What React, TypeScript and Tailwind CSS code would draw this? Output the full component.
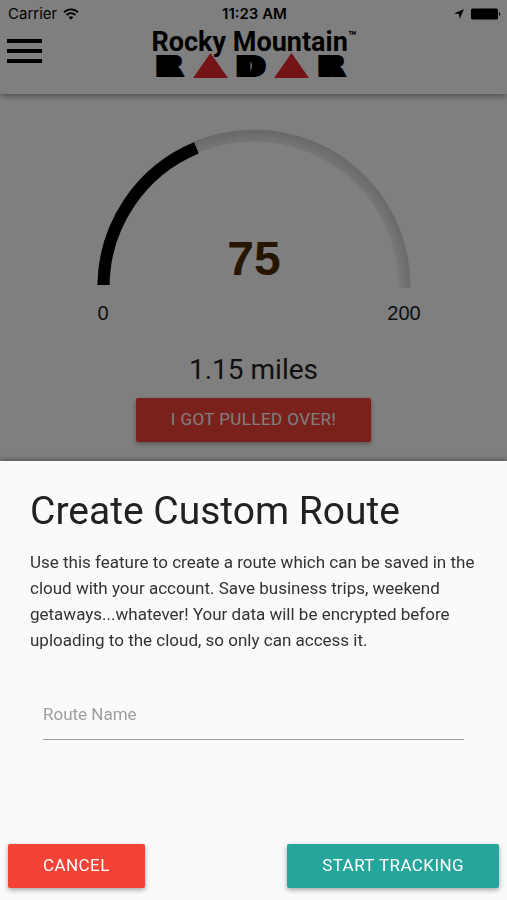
import { useState } from "react";

const MAX_SPEED = 200;

type GaugeProps = {
  value: number;
}

function StatusBar() {
  return (
    <div className="grid grid-cols-3 items-center h-7 pl-2 pr-1.5 font-[Inter,sans-serif] text-[15px] leading-5 text-black">
      <div className="flex items-center gap-1.5">
        <span>Carrier</span>
        <svg viewBox="0 0 16 12" className="w-4 h-3" fill="none" stroke="black" strokeWidth="1.8">
          <path d="M1 4.3a10 10 0 0 1 14 0" />
          <path d="M3.6 7a6.3 6.3 0 0 1 8.8 0" />
          <path d="M8 11.8 5.6 9.3a3.5 3.5 0 0 1 4.8 0z" fill="black" stroke="none" />
        </svg>
      </div>
      <span className="text-center font-semibold">11:23 AM</span>
      <div className="flex items-center justify-end gap-[7px]">
        <svg viewBox="0 0 10 10" className="w-2.5 h-2.5">
          <path d="M10 0 5.6 10 5 5 0 4.6z" />
        </svg>
        <svg viewBox="0 0 30 12" className="w-[30px] h-3">
          <rect x="0" y="0.5" width="27" height="11" rx="1.5" />
          <path d="M28 4a2.2 2.2 0 0 1 0 4z" />
        </svg>
      </div>
    </div>
  );
}

function Triangle() {
  return (
    <svg viewBox="0 0 35 25" className="w-[35px] h-[25px]">
      <path d="M17.5 0 35 25H0z" fill="#e8282e" />
    </svg>
  );
}

// heavy slab look: the side shadows thicken the letter horizontally
function LogoLetter({ letter }: { letter: string }) {
  return (
    <span className="flex w-9 justify-center [text-shadow:-4px_0_black,-2px_0_black,2px_0_black,4px_0_black]">{letter}</span>
  );
}

function Logo() {
  return (
    <div className="w-[208px] text-black">
      <div className="flex items-start h-6 font-[Roboto,sans-serif] font-bold">
        <span className="text-[27px] leading-6 whitespace-nowrap">Rocky Mountain</span>
        <span className="text-[14px] leading-3">™</span>
      </div>
      <div className="flex items-end justify-between w-[198px] h-6 font-['DejaVu_Sans',sans-serif] text-[31px] leading-6 font-bold">
        <LogoLetter letter="R" />
        <Triangle />
        <LogoLetter letter="D" />
        <Triangle />
        <LogoLetter letter="R" />
      </div>
    </div>
  );
}

function Header() {
  return (
    <header className="bg-white shadow-[0_2px_6px_rgba(0,0,0,0.4)]">
      <StatusBar />
      <div className="grid grid-cols-[36px_1fr_32px] items-start px-1.5 h-[66px]">
        <button type="button" aria-label="Menu" className="pt-[11px]">
          <svg viewBox="0 0 36 24" className="w-9 h-6">
            <path d="M1 2h35M1 12h35M1 22h35" stroke="black" strokeWidth="4" />
          </svg>
        </button>
        <div className="flex justify-center pt-0.5">
          <Logo />
        </div>
      </div>
    </header>
  );
}

function Gauge({ value }: GaugeProps) {
  const angle = Math.PI * (1 - value / MAX_SPEED);
  const x = 254 + 150.5 * Math.cos(angle);
  const y = 163 - 150.5 * Math.sin(angle);

  return (
    <svg viewBox="0 0 507 206" className="w-full" fontFamily="'Liberation Sans', Arial, sans-serif">
      <defs>
        <radialGradient id="track" gradientUnits="userSpaceOnUse" cx="254" cy="165" r="158">
          <stop offset="0.91" stopColor="#f2f2f2" />
          <stop offset="0.96" stopColor="#e2e2e2" />
          <stop offset="1" stopColor="#d4d4d4" />
        </radialGradient>
      </defs>
      <path d="M103.5 161A150.5 150.5 0 0 1 404.5 163V164" fill="none" stroke="url(#track)" strokeWidth="12" />
      <path d={`M103.5 161A150.5 150.5 0 0 1 ${x} ${y}`} fill="none" stroke="black" strokeWidth="12.2" />
      <text x="254" y="151" textAnchor="middle" fontSize="48" fontWeight="bold" fill="#4d2c00">{value}</text>
      <text x="103" y="196" textAnchor="middle" fontSize="20" fill="#1a1a1a">0</text>
      <text x="404" y="196" textAnchor="middle" fontSize="20" fill="#1a1a1a">{MAX_SPEED}</text>
    </svg>
  );
}

const buttonClass = "h-11 px-[35px] rounded-xs text-[17px] tracking-wide uppercase text-white shadow-[0_2px_5px_rgba(0,0,0,0.35)]";

function RouteModal() {
  const [name, setName] = useState("");

  return (
    <div role="dialog" aria-labelledby="route-title" className="fixed inset-x-0 bottom-0 bg-[#fafafa] shadow-[0_-1px_5px_rgba(0,0,0,0.4)]">
      <div className="px-[30px] pt-6">
        <h4 id="route-title" className="text-[39px] leading-[52px] text-[#212121]">Create Custom Route</h4>
        <p className="mt-3 text-[17px] leading-[26px] text-[#333333]">
          Use this feature to create a route which can be saved in the cloud with your account. Save business trips, weekend getaways...whatever! Your data will be encrypted before uploading to the cloud, so only can access it.
        </p>
        <div className="px-[13px] mt-9">
          <input
            type="text"
            aria-label="Route Name"
            placeholder="Route Name"
            value={name}
            onChange={(e) => setName(e.target.value)}
            className="block w-full h-[51px] border-b border-[#9e9e9e] bg-transparent text-[17px] text-[#333333] placeholder:text-[#9e9e9e] outline-none"
          />
        </div>
      </div>
      <div className="flex justify-between px-2 pt-[104px] pb-3">
        <button type="button" className={`${buttonClass} bg-[#f44336]`}>Cancel</button>
        <button type="button" className={`${buttonClass} bg-[#26a69a]`}>Start Tracking</button>
      </div>
    </div>
  );
}

export default function App() {
  return (
    <div className="min-h-screen bg-white font-[Roboto,sans-serif]">
      <Header />
      <main className="flex flex-col items-center pt-[30px]">
        <Gauge value={75} />
        <p className="mt-5 text-[28px] leading-10 text-[#212121]">1.15 miles</p>
        <button type="button" className={`${buttonClass} mt-2 bg-[#f44336]`}>I got pulled over!</button>
      </main>
      <div className="fixed inset-0 bg-black/50" />
      <RouteModal />
    </div>
  );
}
